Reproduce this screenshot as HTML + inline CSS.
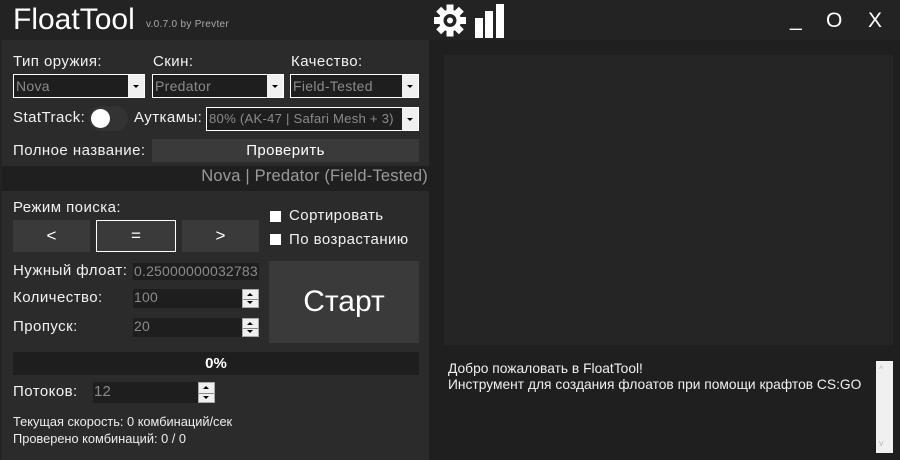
<!DOCTYPE html>
<html><head><meta charset="utf-8"><style>
*{margin:0;padding:0;box-sizing:border-box}
body{width:900px;height:460px;background:#232323;font-family:"Liberation Sans","DejaVu Sans",sans-serif;color:#fff;position:relative;overflow:hidden}
.a{position:absolute;white-space:nowrap}
.l{font-size:15px;letter-spacing:0.45px;color:#f2f2f2}
.combo{position:absolute;background:#1e1e1e;border:1px solid #fff;height:24px;color:#8a8a8a;font-size:14px;letter-spacing:0.3px;line-height:22px;padding-left:2px;overflow:hidden;white-space:nowrap}
.combo .dd{position:absolute;right:0;top:0;width:16px;height:22px;background:#f0f0f0}
.combo .dd:after{content:"";position:absolute;left:5px;top:10px;border-left:3px solid transparent;border-right:3px solid transparent;border-top:3px solid #000}
.btn{position:absolute;background:#3a3a3a;color:#fff;text-align:center}
.inp{position:absolute;background:#1e1e1e;color:#8a8a8a;font-size:14px;letter-spacing:0.2px;padding-left:1px;white-space:nowrap;overflow:hidden}
.spin{position:absolute;width:17px;background:#f0f0f0;border:1px solid #aaa}
.spin:before{content:"";position:absolute;left:4px;top:3px;border-left:3px solid transparent;border-right:3px solid transparent;border-bottom:3px solid #000}
.spin:after{content:"";position:absolute;left:4px;bottom:3px;border-left:3px solid transparent;border-right:3px solid transparent;border-top:3px solid #000}
.spin i{position:absolute;left:0;right:0;top:50%;border-top:1px solid #888}
</style></head><body>
<div class="a" style="left:13px;top:3px;font-size:30px;">FloatTool</div>
<div class="a" style="left:146px;top:19px;font-size:10px;color:#aaa;letter-spacing:0.3px">v.0.7.0 by Prevter</div>
<svg class="a" style="left:433px;top:3px" width="34" height="35" viewBox="0 0 34 35"><g fill="#fff"><circle cx="17" cy="17.5" r="11"/><g transform="translate(17 17.5)"><rect x="-3.5" y="-16" width="7" height="32"/><rect x="-3.5" y="-16" width="7" height="32" transform="rotate(45)"/><rect x="-3.5" y="-16" width="7" height="32" transform="rotate(90)"/><rect x="-3.5" y="-16" width="7" height="32" transform="rotate(135)"/></g></g><circle cx="17" cy="17.5" r="6.5" fill="#232323"/><circle cx="17" cy="17.5" r="3" fill="#fff"/></svg>
<svg class="a" style="left:474px;top:4px" width="32" height="34"><rect x="1" y="14" width="8" height="20" fill="#fff"/><rect x="11" y="7" width="8" height="27" fill="#fff"/><rect x="22" y="0" width="8" height="34" fill="#fff"/></svg>
<div class="a" style="left:790px;top:8px;font-size:21px">_</div>
<div class="a" style="left:826px;top:9px;font-size:21px">O</div>
<div class="a" style="left:868px;top:9px;font-size:21px">X</div>

<div class="a" style="left:2px;top:40px;width:427px;height:420px;background:#2b2b2b"></div>
<div class="a" style="left:429px;top:40px;width:471px;height:420px;background:#1f1f1f"></div>
<div class="a" style="left:444px;top:55px;width:449px;height:290px;background:#252525"></div>

<div class="a l" style="left:13px;top:53px">Тип оружия:</div>
<div class="a l" style="left:153px;top:53px">Скин:</div>
<div class="a l" style="left:291px;top:53px">Качество:</div>
<div class="combo" style="left:13px;top:74px;width:132px">Nova<div class="dd"></div></div>
<div class="combo" style="left:152px;top:74px;width:132px">Predator<div class="dd"></div></div>
<div class="combo" style="left:290px;top:74px;width:129px">Field-Tested<div class="dd"></div></div>

<div class="a l" style="left:13px;top:109px">StatTrack:</div>
<div class="a" style="left:89px;top:106px;width:39px;height:25px;border-radius:13px;background:#333"></div>
<div class="a" style="left:91px;top:109px;width:19px;height:19px;border-radius:50%;background:#fff"></div>
<div class="a l" style="left:134px;top:109px">Ауткамы:</div>
<div class="combo" style="left:206px;top:107px;width:213px;font-size:13.2px;letter-spacing:0.2px">80% (AK-47 | Safari Mesh + 3)<div class="dd"></div></div>

<div class="a l" style="left:13px;top:142px">Полное название:</div>
<div class="btn" style="left:152px;top:139px;width:267px;height:23px;font-size:15px;letter-spacing:0.4px;line-height:23px">Проверить</div>
<div class="a" style="left:2px;top:166px;width:427px;height:25px;background:#1f1f1f"></div>
<div class="a" style="right:472px;top:167px;font-size:16.5px;letter-spacing:0.2px;color:#9a9a9a">Nova | Predator (Field-Tested)</div>

<div class="a l" style="left:13px;top:199px">Режим поиска:</div>
<div class="btn" style="left:13px;top:220px;width:77px;height:32px;font-size:17px;line-height:32px">&lt;</div>
<div class="btn" style="left:96px;top:220px;width:80px;height:32px;font-size:17px;line-height:30px;border:1px solid #fff">=</div>
<div class="btn" style="left:182px;top:220px;width:77px;height:32px;font-size:17px;line-height:32px">&gt;</div>
<div class="a" style="left:270px;top:211px;width:11px;height:11px;background:#fff"></div>
<div class="a l" style="left:289px;top:207px">Сортировать</div>
<div class="a" style="left:270px;top:234px;width:11px;height:11px;background:#fff"></div>
<div class="a l" style="left:289px;top:231px">По возрастанию</div>

<div class="a l" style="left:13px;top:262px">Нужный флоат:</div>
<div class="inp" style="left:133px;top:263px;width:126px;height:17px;line-height:17px">0.25000000032783</div>
<div class="a l" style="left:13px;top:289px">Количество:</div>
<div class="inp" style="left:133px;top:289px;width:110px;height:19px;line-height:17px">100</div>
<div class="spin" style="left:242px;top:289px;height:19px"><i></i></div>
<div class="a l" style="left:13px;top:318px">Пропуск:</div>
<div class="inp" style="left:133px;top:318px;width:110px;height:19px;line-height:17px">20</div>
<div class="spin" style="left:242px;top:318px;height:19px"><i></i></div>
<div class="btn" style="left:269px;top:261px;width:150px;height:82px;font-size:30px;line-height:82px">Старт</div>

<div class="a" style="left:13px;top:352px;width:406px;height:23px;background:#1e1e1e;text-align:center;font-size:15px;font-weight:bold;line-height:23px">0%</div>
<div class="a l" style="left:13px;top:383px">Потоков:</div>
<div class="inp" style="left:93px;top:382px;width:106px;height:21px;line-height:20px;font-size:15px">12</div>
<div class="spin" style="left:198px;top:382px;height:21px"><i></i></div>
<div class="a" style="left:13px;top:414px;font-size:12.8px;color:#eee">Текущая скорость: 0 комбинаций/сек</div>
<div class="a" style="left:13px;top:431px;font-size:12.8px;color:#eee">Проверено комбинаций: 0 / 0</div>

<div class="a" style="left:448px;top:361px;font-size:13.8px;line-height:16px;color:#f0f0f0">Добро пожаловать в FloatTool!<br>Инструмент для создания флоатов при помощи крафтов CS:GO</div>
<div class="a" style="left:876px;top:361px;width:17px;height:92px;background:#f0f0f0"></div>
<div class="a" style="left:879px;top:364px;font-size:9px;color:#bbb">^</div>
<div class="a" style="left:879px;top:438px;font-size:9px;color:#bbb">v</div>
</body></html>
